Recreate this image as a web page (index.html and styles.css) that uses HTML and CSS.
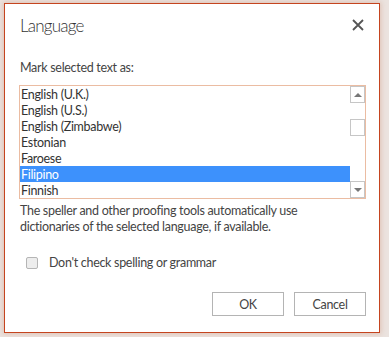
FILE: index.html
```html
<!DOCTYPE html>
<html>
<head>
<meta charset="utf-8">
<link rel="stylesheet" href="styles.css">
</head>
<body>
<div class="dialog">
  <div class="header">
    <div class="title">Language</div>
    <svg class="close" width="12" height="12" viewBox="0 0 12 12"><path d="M1 1L11 11M11 1L1 11" stroke="#555" stroke-width="1.8"/></svg>
  </div>
  <div class="label">Mark selected text as:</div>
  <div class="listbox">
    <ul class="items">
      <li>English (U.K.)</li>
      <li>English (U.S.)</li>
      <li>English (Zimbabwe)</li>
      <li>Estonian</li>
      <li>Faroese</li>
      <li class="selected">Filipino</li>
      <li>Finnish</li>
    </ul>
    <div class="scrollbar">
      <div class="sbtn"><span class="arrow-up"></span></div>
      <div class="thumb"></div>
      <div class="sbtn down"><span class="arrow-down"></span></div>
    </div>
  </div>
  <p class="desc">The speller and other proofing tools automatically use dictionaries of the selected language, if available.</p>
  <label class="check"><span class="box"></span>Don't check spelling or grammar</label>
  <div class="footer">
    <button class="btn">OK</button>
    <button class="btn">Cancel</button>
  </div>
</div>
</body>
</html>
```
FILE: styles.css
```css
html, body {
  margin: 0;
  padding: 0;
}
body {
  background: #ebe3df;
  padding: 3px 0 0 4px;
  font-family: Lato, "Open Sans", sans-serif;
  color: #444;
  height: 337px;
  box-sizing: border-box;
}
.dialog {
  width: 376px;
  height: 330px;
  box-sizing: border-box;
  border: 1px solid #c5441f;
  background: #fff;
  box-shadow: 0 0 5px 1px rgba(200, 130, 100, 0.35);
  padding: 0 13px 0 14px;
  display: flex;
  flex-direction: column;
  font-size: 12.5px;
  letter-spacing: -0.3px;
}
.header {
  display: flex;
  justify-content: space-between;
  align-items: center;
  height: 40px;
  padding-top: 1px;
}
.title {
  font-size: 17px;
  font-weight: 300;
  letter-spacing: -0.8px;
  color: #333;
  padding-left: 1px;
}
.close {
  margin-right: 2px;
}
.label {
  margin-top: 14px;
  line-height: 18px;
  padding-left: 1px;
  color: #444;
}
.listbox {
  margin-top: 8px;
  width: 347px;
  height: 114px;
  box-sizing: border-box;
  border: 1px solid #ebbca2;
  display: flex;
}
.items {
  list-style: none;
  margin: 0;
  padding: 0;
  width: 330px;
}
.items li {
  height: 16px;
  line-height: 17px;
  padding-left: 1px;
  color: #333;
  white-space: nowrap;
}
.items li.selected {
  background: #3d91fc;
  color: #fff;
}
.scrollbar {
  width: 15px;
  display: flex;
  flex-direction: column;
}
.sbtn {
  height: 17px;
  box-sizing: border-box;
  border: 1px solid #c6c6c6;
  display: flex;
  align-items: center;
  justify-content: center;
}
.sbtn.down {
  margin-top: auto;
}
.thumb {
  margin-top: 16px;
  height: 17px;
  box-sizing: border-box;
  border: 1px solid #c6c6c6;
}
.arrow-up {
  width: 0;
  height: 0;
  border-left: 4px solid transparent;
  border-right: 4px solid transparent;
  border-bottom: 4px solid #777;
}
.arrow-down {
  width: 0;
  height: 0;
  border-left: 4px solid transparent;
  border-right: 4px solid transparent;
  border-top: 4px solid #777;
}
.desc {
  margin: 4px 0 0 1px;
  max-width: 296px;
  line-height: 16px;
  color: #444;
}
.check {
  margin-top: 19px;
  display: flex;
  align-items: center;
  line-height: 18px;
  color: #444;
}
.box {
  width: 12px;
  height: 12px;
  box-sizing: border-box;
  border: 1px solid #b5b5b5;
  border-radius: 2px;
  background: #ededed;
  margin: 0 11px 0 7px;
}
.footer {
  margin-top: 20px;
  display: flex;
  justify-content: flex-end;
  gap: 10px;
}
.btn {
  width: 72px;
  height: 24px;
  box-sizing: border-box;
  border: 1px solid #b4b4b4;
  background: #fff;
  font-family: inherit;
  font-size: 12.5px;
  letter-spacing: -0.3px;
  color: #444;
  padding: 0;
}
```
